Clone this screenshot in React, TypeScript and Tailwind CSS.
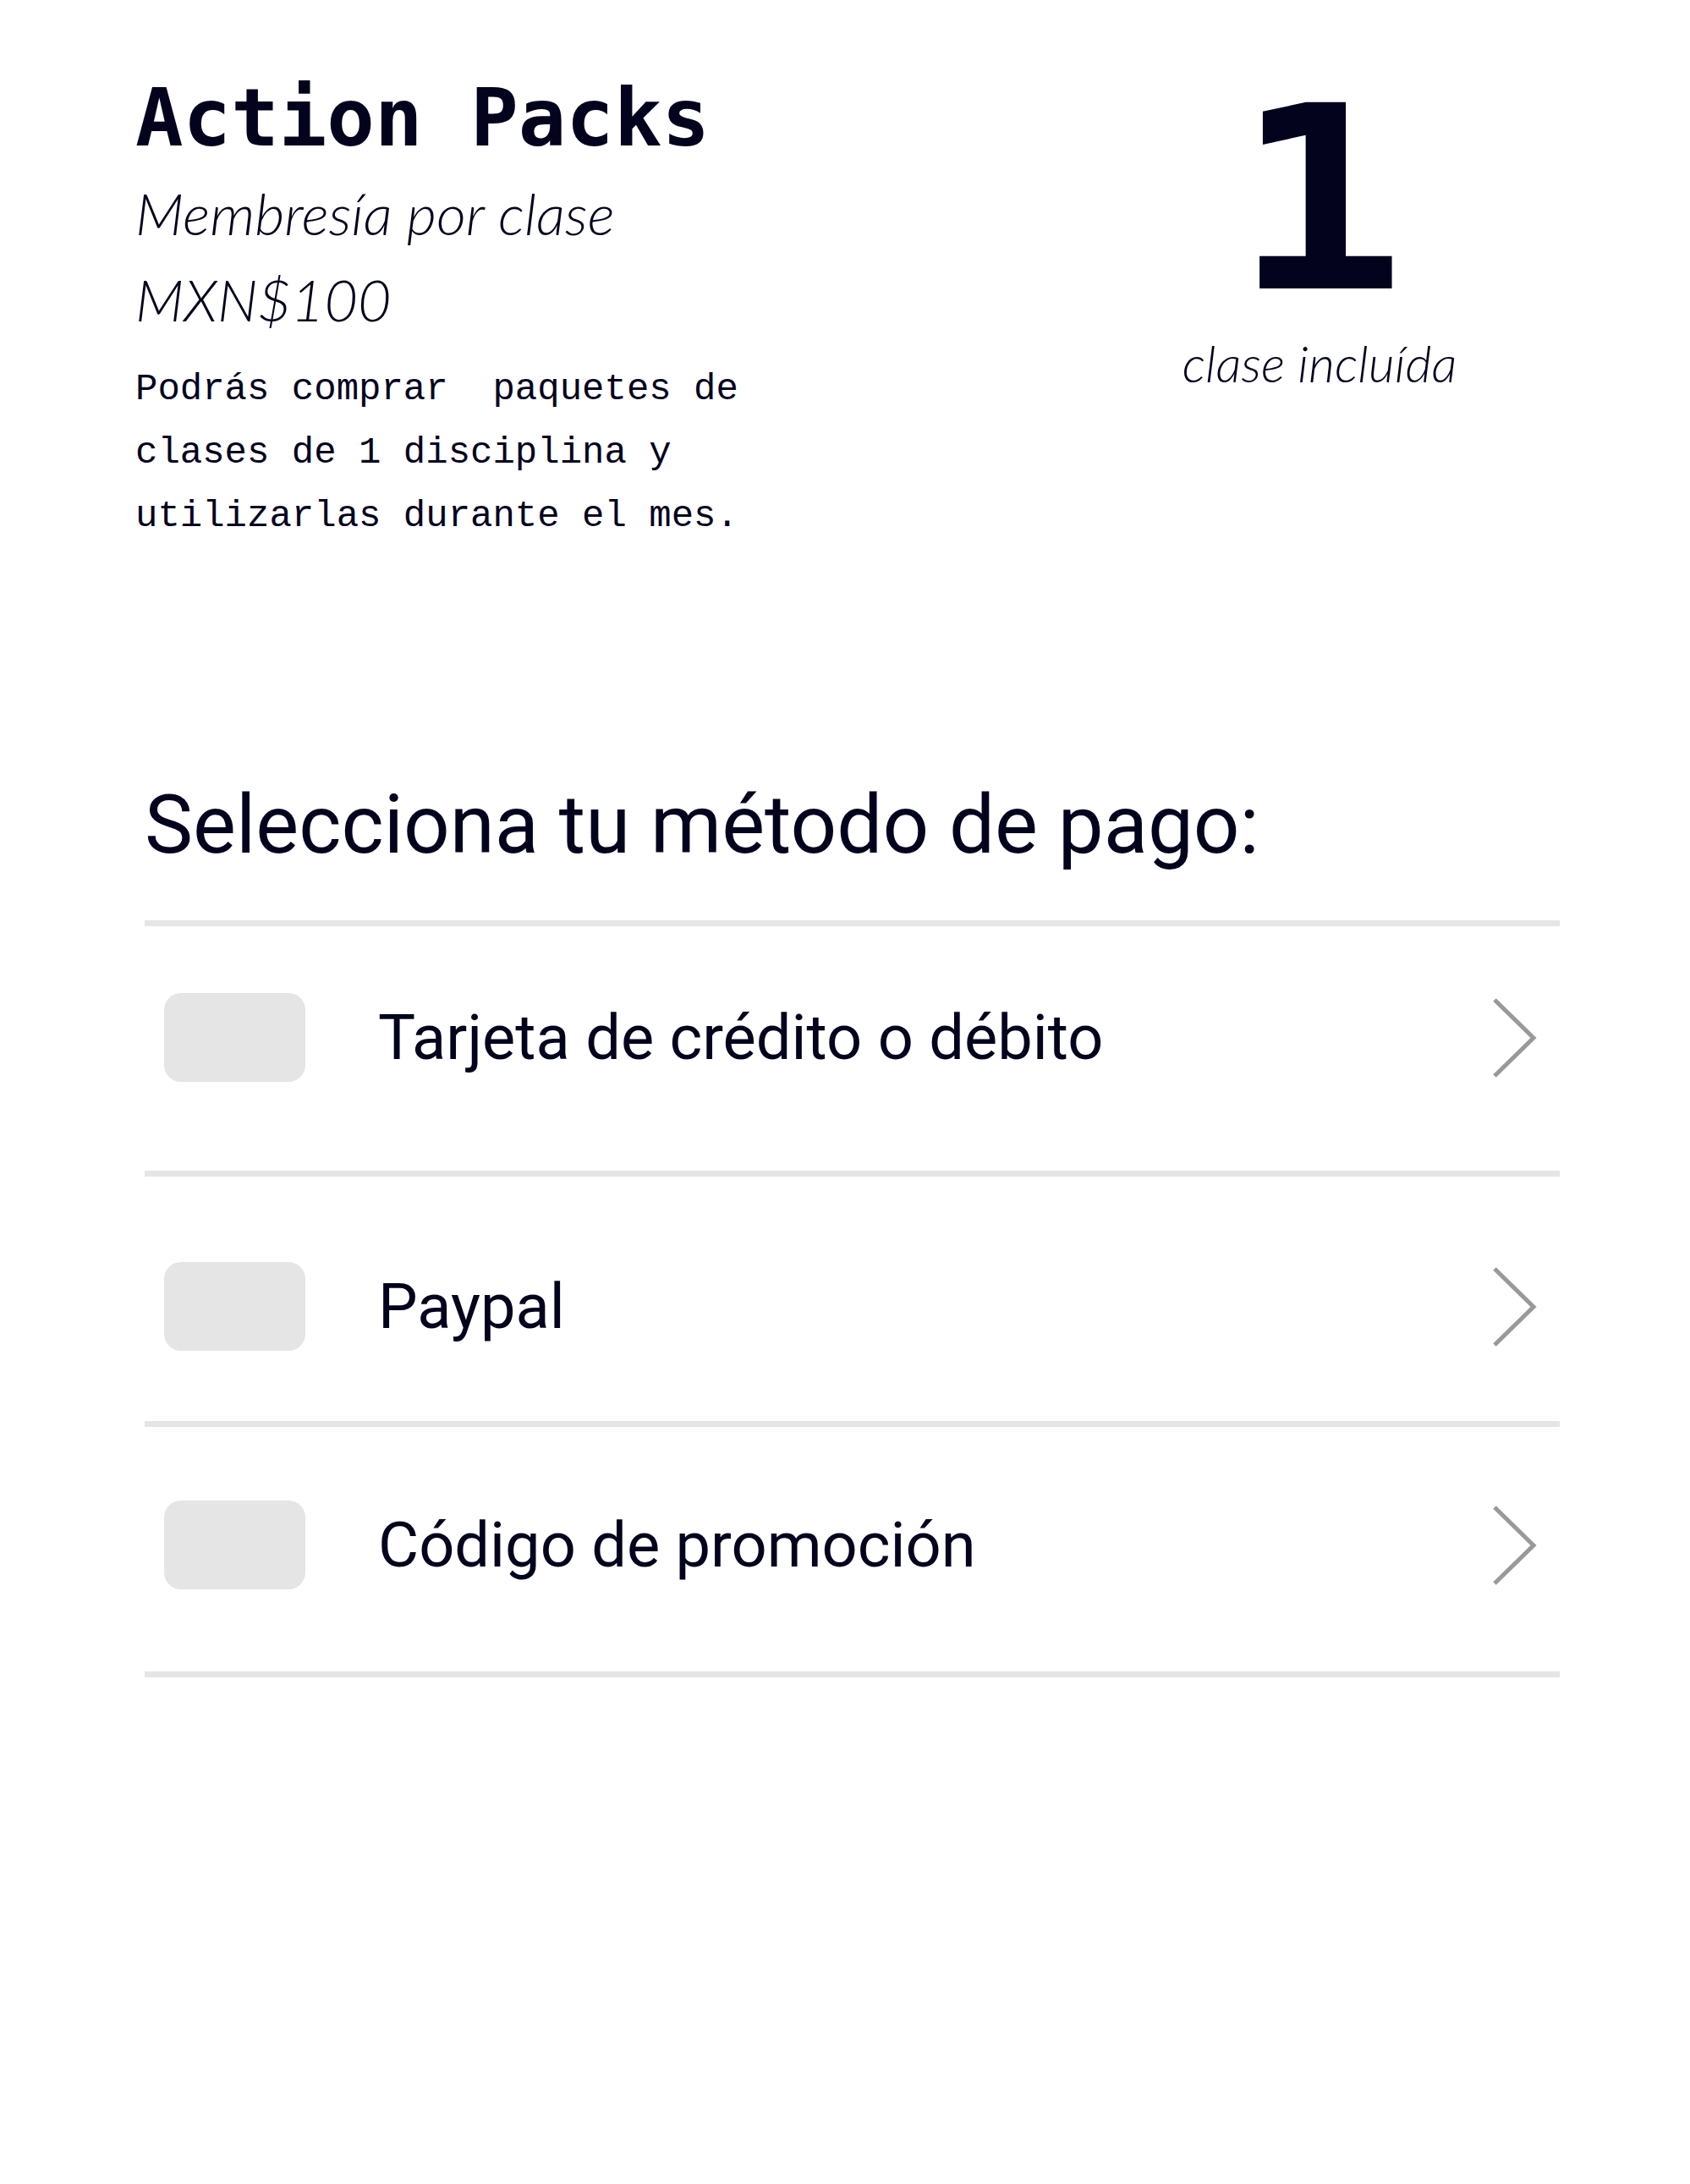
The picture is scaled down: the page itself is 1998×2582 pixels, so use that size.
const methods = [
  { label: 'Tarjeta de crédito o débito', pad: 'pt-[79px]' },
  { label: 'Paypal', pad: 'pt-[101px]' },
  { label: 'Código de promoción', pad: 'pt-[87px]' },
];

function Chevron() {
  return (
    <svg width="54" height="96" viewBox="0 0 54 96" fill="none" className="shrink-0">
      <polyline points="4,3 50,48 4,93" stroke="#999999" strokeWidth="5" />
    </svg>
  );
}

export default function App() {
  return (
    <div className="min-h-screen w-full bg-white text-[#03031e]">
      <div className="flex items-start justify-between pl-[160px] pr-[238px] pt-[88px]">
        <div className="flex flex-col">
          <h1 className="font-['DejaVu_Sans_Mono',monospace] text-[94px] font-bold leading-[104px]">
            Action Packs
          </h1>
          <p className="mt-[8px] font-['Lato',sans-serif] text-[68px] font-light italic leading-[104px]">
            Membresía por clase
          </p>
          <p className="font-['Lato',sans-serif] text-[68px] font-light italic leading-[100px]">
            MXN$100
          </p>
          <p className="mt-[19px] w-[760px] whitespace-pre font-['Liberation_Mono',monospace] text-[44px] leading-[75px]">
            {'Podrás comprar  paquetes de\nclases de 1 disciplina y\nutilizarlas durante el mes.'}
          </p>
        </div>
        <div className="flex w-[400px] flex-col items-center">
          <span className="-mt-[2px] inline-block scale-x-[1.12] font-['DejaVu_Sans_Mono',monospace] text-[302px] font-bold leading-[302px]">
            1
          </span>
          <span className="mt-[6px] font-['Lato',sans-serif] text-[60px] font-light italic leading-[70px]">
            clase incluída
          </span>
        </div>
      </div>

      <div className="pl-[171px] pr-[154px] pb-[200px]">
        <h2 className="mt-[279px] font-['Roboto',sans-serif] text-[96px] leading-[96px]">
          Selecciona tu método de pago:
        </h2>
        <ul className="mt-[65px] border-t-[7px] border-[#e5e5e5]">
          {methods.map((m) => (
            <li key={m.label} className={`h-[296px] border-b-[7px] border-[#e5e5e5] pl-[23px] pr-[27px] ${m.pad}`}>
              <div className="flex h-[105px] items-center">
                <div className="h-[105px] w-[167px] shrink-0 rounded-[20px] bg-[#e5e5e5]" />
                <span className="ml-[86px] flex-1 font-['Roboto',sans-serif] text-[74px] leading-none">
                  {m.label}
                </span>
                <Chevron />
              </div>
            </li>
          ))}
        </ul>
      </div>
    </div>
  );
}
